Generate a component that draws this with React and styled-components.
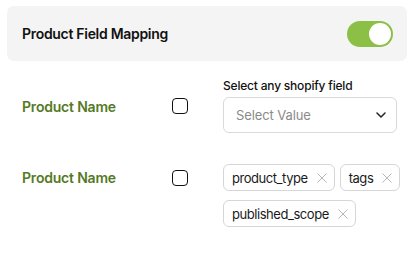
import React from "react";
import styled, { createGlobalStyle } from "styled-components";

const Global = createGlobalStyle`
  html, body { margin: 0; padding: 0; background: #fff; }
  body { font-family: Inter, "Noto Sans", sans-serif; color: #111; }
  * { box-sizing: border-box; }
`;

const Page = styled.div`
  width: 413px;
  padding: 6px 6px 0 7px;
`;

const Header = styled.div`
  height: 55px;
  background: #f4f4f4;
  border-radius: 7px;
  display: flex;
  align-items: center;
  justify-content: space-between;
  padding: 0 14px 0 15px;
`;

const Title = styled.h2`
  margin: 0;
  font-size: 14px;
  font-weight: 600;
  color: #111;
  letter-spacing: -0.3px;
`;

const Toggle = styled.div`
  width: 46px;
  height: 26px;
  border-radius: 13px;
  background: #8cbf45;
  display: flex;
  align-items: center;
  justify-content: ${(p) => (p.$on ? "flex-end" : "flex-start")};
  padding: 0 2px;
`;

const Knob = styled.span`
  width: 22px;
  height: 22px;
  border-radius: 50%;
  background: #fff;
`;

const Rows = styled.div`
  display: flex;
  flex-direction: column;
  gap: 31px;
  padding: 18px 0 0 15px;
`;

const Row = styled.div`
  display: grid;
  grid-template-columns: 150px 51px 180px;
  align-items: ${(p) => p.$align || "center"};
`;

const Cell = styled.div`
  min-height: 27px;
  display: flex;
  align-items: center;
`;

const Label = styled.span`
  font-size: 14px;
  font-weight: 600;
  color: #557a24;
  letter-spacing: -0.2px;
`;

const Check = styled.span`
  width: 16px;
  height: 16px;
  border: 1.5px solid #111;
  border-radius: 4px;
  display: block;
`;

const Field = styled.div`
  display: flex;
  flex-direction: column;
  gap: 4px;
  width: 174px;
`;

const FieldLabel = styled.span`
  font-size: 12px;
  line-height: 14px;
  font-weight: 500;
  color: #111;
  letter-spacing: -0.2px;
`;

const Select = styled.div`
  height: 36px;
  border: 1px solid #d9d9d9;
  border-radius: 6px;
  display: flex;
  align-items: center;
  justify-content: space-between;
  padding: 0 10px 0 12px;
`;

const Placeholder = styled.span`
  font-size: 13px;
  color: #8a8a8a;
  letter-spacing: -0.1px;
`;

const Chips = styled.div`
  display: flex;
  flex-wrap: wrap;
  gap: 9px 5px;
`;

const Chip = styled.span`
  height: 27px;
  border: 1px solid #d6d6d6;
  border-radius: 6px;
  display: inline-flex;
  align-items: center;
  gap: 9px;
  padding: 0 7px 0 8px;
  font-size: 13px;
  letter-spacing: -0.45px;
  color: #1a1a1a;
`;

const Chevron = () => (
  <svg width="10" height="6" viewBox="0 0 10 6" fill="none">
    <path d="M1 1l4 4 4-4" stroke="#222" strokeWidth="1.5" strokeLinecap="round" strokeLinejoin="round" />
  </svg>
);

const Cross = () => (
  <svg width="10" height="10" viewBox="0 0 10 10" fill="none">
    <path d="M0.5 0.5l9 9M9.5 0.5l-9 9" stroke="#b8b8b8" strokeWidth="1" />
  </svg>
);

export default function App() {
  const chips = ["product_type", "tags", "published_scope"];
  return (
    <Page>
      <Global />
      <Header>
        <Title>Product Field Mapping</Title>
        <Toggle $on>
          <Knob />
        </Toggle>
      </Header>
      <Rows>
        <Row>
          <Cell><Label>Product Name</Label></Cell>
          <Cell><Check /></Cell>
          <Field>
            <FieldLabel>Select any shopify field</FieldLabel>
            <Select>
              <Placeholder>Select Value</Placeholder>
              <Chevron />
            </Select>
          </Field>
        </Row>
        <Row $align="start">
          <Cell><Label>Product Name</Label></Cell>
          <Cell><Check /></Cell>
          <Chips>
            {chips.map((c) => (
              <Chip key={c}>
                {c}
                <Cross />
              </Chip>
            ))}
          </Chips>
        </Row>
      </Rows>
    </Page>
  );
}
